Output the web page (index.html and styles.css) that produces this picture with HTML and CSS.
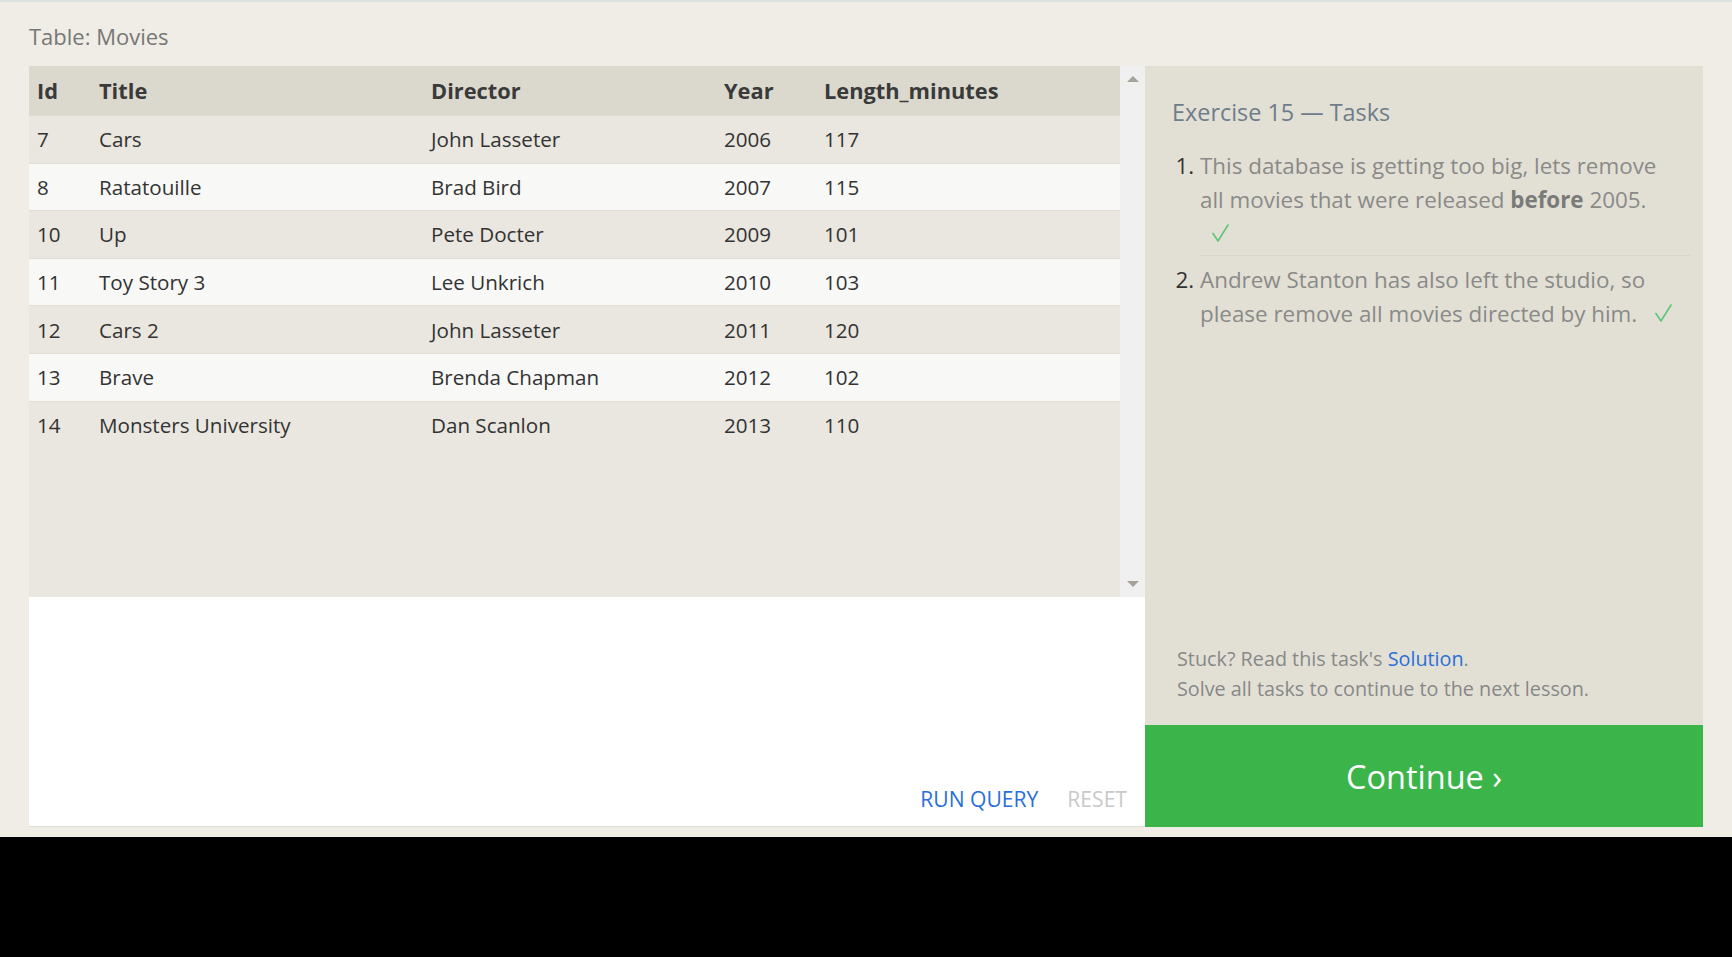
FILE: index.html
```html
<!DOCTYPE html>
<html lang="en">
<head>
<meta charset="utf-8">
<title>SQL Lesson 15 — Movies</title>
<link rel="stylesheet" href="styles.css">
</head>
<body>
<div class="page">
  <div class="table-title">Table: Movies</div>
  <div class="main">
    <section class="left">
      <div class="table-area">
        <div class="table-scroll">
          <table class="movies">
            <colgroup>
              <col class="c-id"><col class="c-title"><col class="c-director"><col class="c-year"><col class="c-len">
            </colgroup>
            <thead>
              <tr><th>Id</th><th>Title</th><th>Director</th><th>Year</th><th>Length_minutes</th></tr>
            </thead>
            <tbody>
              <tr><td>7</td><td>Cars</td><td>John Lasseter</td><td>2006</td><td>117</td></tr>
              <tr><td>8</td><td>Ratatouille</td><td>Brad Bird</td><td>2007</td><td>115</td></tr>
              <tr><td>10</td><td>Up</td><td>Pete Docter</td><td>2009</td><td>101</td></tr>
              <tr><td>11</td><td>Toy Story 3</td><td>Lee Unkrich</td><td>2010</td><td>103</td></tr>
              <tr><td>12</td><td>Cars 2</td><td>John Lasseter</td><td>2011</td><td>120</td></tr>
              <tr><td>13</td><td>Brave</td><td>Brenda Chapman</td><td>2012</td><td>102</td></tr>
              <tr><td>14</td><td>Monsters University</td><td>Dan Scanlon</td><td>2013</td><td>110</td></tr>
            </tbody>
          </table>
        </div>
        <div class="scrollbar">
          <span class="arrow arrow-up"></span>
          <span class="arrow arrow-down"></span>
        </div>
      </div>
      <div class="editor">
        <div class="editor-actions">
          <span class="btn-run">RUN QUERY</span>
          <span class="btn-reset">RESET</span>
        </div>
      </div>
    </section>
    <aside class="right">
      <h2 class="ex-title">Exercise 15 — Tasks</h2>
      <ol class="tasks">
        <li>This database is getting too big, lets remove all movies that were released <b>before</b>&nbsp;2005. <span class="check check-block"><svg class="check-icon" viewBox="0 0 17 18" width="17" height="18"><polyline points="1,9.5 6,17 16,1" /></svg></span></li>
        <li>Andrew Stanton has also left the studio, so please remove all movies directed by him. <span class="check"><svg class="check-icon" viewBox="0 0 17 18" width="17" height="18"><polyline points="1,9.5 6,17 16,1" /></svg></span></li>
      </ol>
      <div class="help">
        <div>Stuck? Read this task's <a class="solution" href="#">Solution</a>.</div>
        <div>Solve all tasks to continue to the next lesson.</div>
      </div>
      <div class="continue">Continue ›</div>
    </aside>
  </div>
</div>
</body>
</html>
```
FILE: styles.css
```css
html {
  background: #000;
}
body {
  margin: 0;
  font-family: "Open Sans", "Noto Sans", sans-serif;
  color: #333;
}
.page {
  height: 837px;
  box-sizing: border-box;
  background: #efede5;
  border-top: 2px solid #dce2de;
  padding: 0 29px;
}
.table-title {
  font-size: 22px;
  line-height: 30px;
  color: #777;
  padding-top: 19px;
  height: 45px;
  box-sizing: border-box;
  margin-bottom: 19px;
}
.main {
  display: flex;
  height: 761px;
}
.left {
  width: 1116px;
  display: flex;
  flex-direction: column;
}
.table-area {
  height: 531px;
  display: flex;
  background: #e9e7df;
}
.table-scroll {
  flex: 1;
}
.movies {
  width: 100%;
  border-collapse: collapse;
  table-layout: fixed;
  font-size: 20.6px;
}
.c-id { width: 62px; }
.c-title { width: 332px; }
.c-director { width: 293px; }
.c-year { width: 100px; }
.movies th {
  background: #dbd9cd;
  text-align: left;
  font-weight: 700;
  color: #3a3a3a;
  height: 49px;
  padding: 0 0 0 8px;
  font-size: 21.8px;
}
.movies td {
  height: 46.6px;
  padding: 0 0 0 8px;
  border-top: 1px solid #dfddd4;
  color: #333;
}
.movies tbody tr:nth-child(odd) td {
  background: #e9e7df;
}
.movies tbody tr:nth-child(even) td {
  background: #f8f8f6;
}
.scrollbar {
  width: 25px;
  background: #f0f0f0;
  display: flex;
  flex-direction: column;
  justify-content: space-between;
  align-items: center;
  padding: 10px 0 10px;
  box-sizing: border-box;
}
.arrow {
  width: 0;
  height: 0;
  border-left: 6px solid transparent;
  border-right: 6px solid transparent;
}
.arrow-up {
  border-bottom: 6px solid #a6a29b;
}
.arrow-down {
  border-top: 6px solid #a6a29b;
}
.editor {
  flex: 1;
  background: #fff;
  display: flex;
  flex-direction: column;
  justify-content: flex-end;
  box-shadow: 0 1px 1px rgba(0, 0, 0, 0.06);
  margin-bottom: 1px;
}
.editor-actions {
  display: flex;
  justify-content: flex-end;
  gap: 29px;
  padding: 0 18px 13px 0;
  font-size: 21.1px;
  line-height: 28px;
}
.btn-run {
  color: #2a6fd8;
}
.btn-reset {
  color: #c9c9c9;
}
.right {
  flex: 1;
  background: #e2e0d5;
  display: flex;
  flex-direction: column;
}
.ex-title {
  margin: 0;
  font-weight: 400;
  font-size: 23.4px;
  line-height: 32px;
  color: #6f7c8a;
  padding: 30px 0 0 27px;
}
.tasks {
  margin: 21px 13px 0 0;
  padding: 0 0 0 55px;
  font-size: 22.4px;
  line-height: 34px;
  color: #8a8a88;
}
.tasks li {
  padding-right: 8px;
}
.tasks li::marker {
  color: #333;
}
.tasks li:first-child {
  border-bottom: 1px solid #d8d6cb;
  padding-bottom: 4px;
  margin-bottom: 7px;
}
.tasks b {
  color: #7a7a78;
}
.check {
  margin-left: 12px;
}
.check-block {
  display: block;
}
.check-icon {
  fill: none;
  stroke: #5ec679;
  stroke-width: 1.6;
  stroke-linecap: round;
  stroke-linejoin: round;
  vertical-align: baseline;
}
.help {
  margin-top: auto;
  padding: 0 0 21px 32px;
  font-size: 19.8px;
  line-height: 30px;
  color: #888;
}
.solution {
  color: #2a6fd8;
  text-decoration: none;
}
.continue {
  height: 102px;
  background: #3bb44a;
  color: #fff;
  font-size: 32.5px;
  display: flex;
  align-items: center;
  justify-content: center;
}
```
